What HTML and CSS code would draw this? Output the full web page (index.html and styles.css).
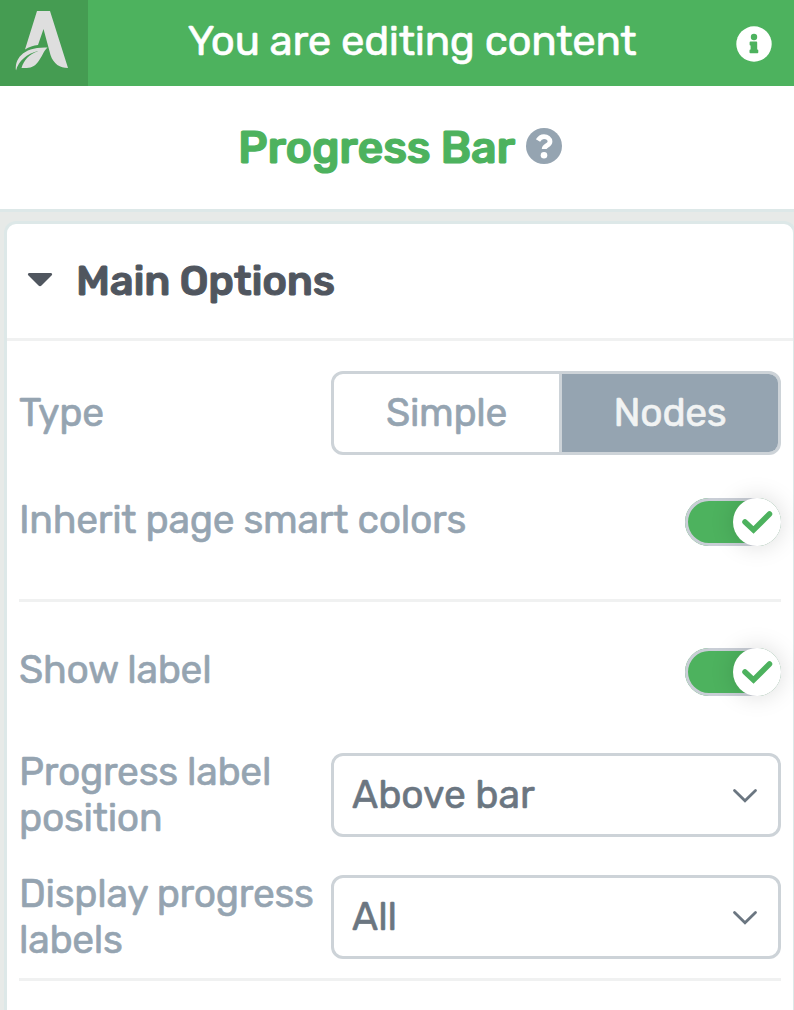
FILE: index.html
```html
<!DOCTYPE html>
<html lang="en">
<head>
    <meta charset="UTF-8">
    <meta name="viewport" content="width=device-width, initial-scale=1.0">
    <title>Progress Bar</title>
    <link rel="stylesheet" href="styles.css">
</head>
<body>
    <header class="topbar">
        <div class="logo">
            <svg width="88" height="86" viewBox="0 0 88 86">
                <path d="M37 11H50L68 68C60 68 53.500 64 50.500 55L43.500 29L38 45C33.500 45.300 29 47 25 49.500Z" fill="#dedede"/>
                <path d="M16 70.500C14.500 59 23 46.500 47.500 47.500C43.500 51 42 57 38 62C34 67.500 29 68.500 21.500 68C24 60 29 54.500 38 51C27 53.500 18.500 61 16 70.500Z" fill="#dedede"/>
            </svg>
        </div>
        <div class="topbar-text"><span>You are editing content</span></div>
        <svg class="info-icon" width="36" height="36" viewBox="0 0 36 36">
            <circle cx="18" cy="18" r="17.700" fill="#fff"/>
            <circle cx="18" cy="11" r="3.200" fill="#4db25e"/>
            <path d="M14.500 16.500H20.300V24.500H21.400V26.300H14.400V24.500H15.500V18.500H14.500Z" fill="#4db25e" stroke="#4db25e" stroke-width="1.800" stroke-linejoin="round"/>
        </svg>
    </header>

    <div class="title">
        <h1>Progress Bar</h1>
        <svg width="36" height="36" viewBox="0 0 36 36">
            <circle cx="18" cy="18" r="18" fill="#95a4b1"/>
            <path d="M12 12.500C13.500 9.800 15.300 8.600 18 8.600C21.300 8.600 24 10.700 24 13.500C24 17.500 18.200 17.500 18.200 21" fill="none" stroke="#fff" stroke-width="4.800"/>
            <circle cx="18" cy="27.200" r="3.300" fill="#fff"/>
        </svg>
    </div>

    <main class="panel">
        <div class="panel-header">
            <svg width="26" height="16" viewBox="0 0 26 16">
                <path d="M2 1H24Q26 1.800 24.500 3.500L14.500 13.500Q13 15 11.500 13.500L1.500 3.500Q0 1.800 2 1Z" fill="#50565f"/>
            </svg>
            <h2>Main Options</h2>
        </div>

        <div class="panel-body">
            <div class="row">
                <span class="label">Type</span>
                <div class="button-group">
                    <div class="option">Simple</div>
                    <div class="option active">Nodes</div>
                </div>
            </div>

            <div class="row row-switch">
                <span class="label">Inherit page smart colors</span>
                <div class="switch">
                    <div class="knob">
                        <svg width="48" height="48" viewBox="0 0 48 48"><path d="M12 24L20.500 32L36.500 16" fill="none" stroke="#4db25e" stroke-width="5.500" stroke-linecap="round"/></svg>
                    </div>
                </div>
            </div>

            <hr class="divider">

            <div class="row row-switch row-show">
                <span class="label">Show label</span>
                <div class="switch">
                    <div class="knob">
                        <svg width="48" height="48" viewBox="0 0 48 48"><path d="M12 24L20.500 32L36.500 16" fill="none" stroke="#4db25e" stroke-width="5.500" stroke-linecap="round"/></svg>
                    </div>
                </div>
            </div>

            <div class="row row-position">
                <span class="label">Progress label<br>position</span>
                <div class="select">
                    <span>Above bar</span>
                    <svg width="26" height="16" viewBox="0 0 26 16"><path d="M2.500 3.500L13 13.800L23.500 3.500" fill="none" stroke="#6b7681" stroke-width="2.800" stroke-linecap="round"/></svg>
                </div>
            </div>

            <div class="row row-display">
                <span class="label">Display progress<br>labels</span>
                <div class="select">
                    <span>All</span>
                    <svg width="26" height="16" viewBox="0 0 26 16"><path d="M2.500 3.500L13 13.800L23.500 3.500" fill="none" stroke="#6b7681" stroke-width="2.800" stroke-linecap="round"/></svg>
                </div>
            </div>

            <hr class="divider divider-last">
        </div>
    </main>
</body>
</html>
```

FILE: styles.css
```css
* {
    margin: 0;
    padding: 0;
    box-sizing: border-box;
}

body {
    height: 1010px;
    display: flex;
    flex-direction: column;
    overflow: hidden;
    background-color: #e7eae8;
    font-family: Rubik, Roboto, sans-serif;
    font-size: 39px;
    font-weight: 450;
    letter-spacing: -0.3px;
    color: #95a4b1;
    -webkit-text-stroke: 0.6px currentColor;
}

svg {
    display: block;
    flex-shrink: 0;
}

.topbar {
    display: flex;
    align-items: center;
    height: 86px;
    flex-shrink: 0;
    padding-right: 22px;
    background-color: #4db25e;
    color: #fff;
}

.logo {
    width: 88px;
    height: 86px;
    background-color: #459c52;
}

.topbar-text {
    flex: 1;
    padding-bottom: 4px;
    text-align: center;
    font-size: 42px;
}

.info-icon {
    margin-top: 2px;
}

.title {
    display: flex;
    justify-content: center;
    align-items: center;
    gap: 11px;
    height: 126px;
    flex-shrink: 0;
    padding-left: 6px;
    background-color: #fff;
    border-bottom: 3px solid #dde8e8;
}

.title svg {
    margin-bottom: 4px;
}

h1 {
    font-size: 45px;
    font-weight: 550;
    letter-spacing: -0.3px;
    color: #4db25e;
    -webkit-text-stroke: 1.2px currentColor;
}

.panel {
    flex: 1;
    margin: 9px -2px 0 4px;
    border: 3px solid #dde8e8;
    border-bottom: none;
    border-radius: 12px 12px 0 0;
    background-color: #fff;
}

.panel-header {
    display: flex;
    align-items: center;
    gap: 23px;
    height: 117px;
    padding-left: 20px;
    border-bottom: 3px solid #f0f1f1;
}

.panel-header svg {
    margin-bottom: 2px;
}

h2 {
    font-size: 42px;
    font-weight: 550;
    letter-spacing: -0.3px;
    color: #50565f;
    -webkit-text-stroke: 1px currentColor;
}

.panel-body {
    padding: 30px 12px 0;
}

.row {
    display: flex;
    justify-content: space-between;
    align-items: center;
}

.label {
    line-height: 46px;
    white-space: nowrap;
}

.row-switch {
    height: 48px;
    margin-top: 43px;
}

.row-switch .label {
    padding-bottom: 4px;
}

.row-show {
    margin-top: 46px;
}

.row-position {
    margin-top: 53px;
}

.row-display {
    margin-top: 30px;
}

.button-group,
.select {
    display: flex;
    width: 450px;
    height: 84px;
    border: 3px solid #cdd3d8;
    border-radius: 12px;
    overflow: hidden;
}

.option {
    display: flex;
    justify-content: center;
    align-items: center;
    width: 228px;
    border-right: 3px solid #cdd3d8;
}

.option.active {
    flex: 1;
    border-right: none;
    background-color: #95a4b1;
    color: #f1f3f3;
}

.select {
    justify-content: space-between;
    align-items: center;
    padding: 0 20px 0 18px;
    letter-spacing: 0;
    color: #6b7681;
}

.switch {
    display: flex;
    justify-content: flex-end;
    width: 96px;
    height: 48px;
    border-radius: 24px;
    background-color: #4db25e;
    box-shadow: inset 0 0 0 3px #c9ced6;
}

.knob {
    width: 48px;
    height: 48px;
    border-radius: 50%;
    background-color: #fff;
    box-shadow: 0 0 24px rgba(0, 0, 0, 0.15);
}

.divider {
    height: 3px;
    margin-top: 53px;
    border: none;
    background-color: #f0f1f1;
}

.divider-last {
    margin-top: 15px;
}
```
